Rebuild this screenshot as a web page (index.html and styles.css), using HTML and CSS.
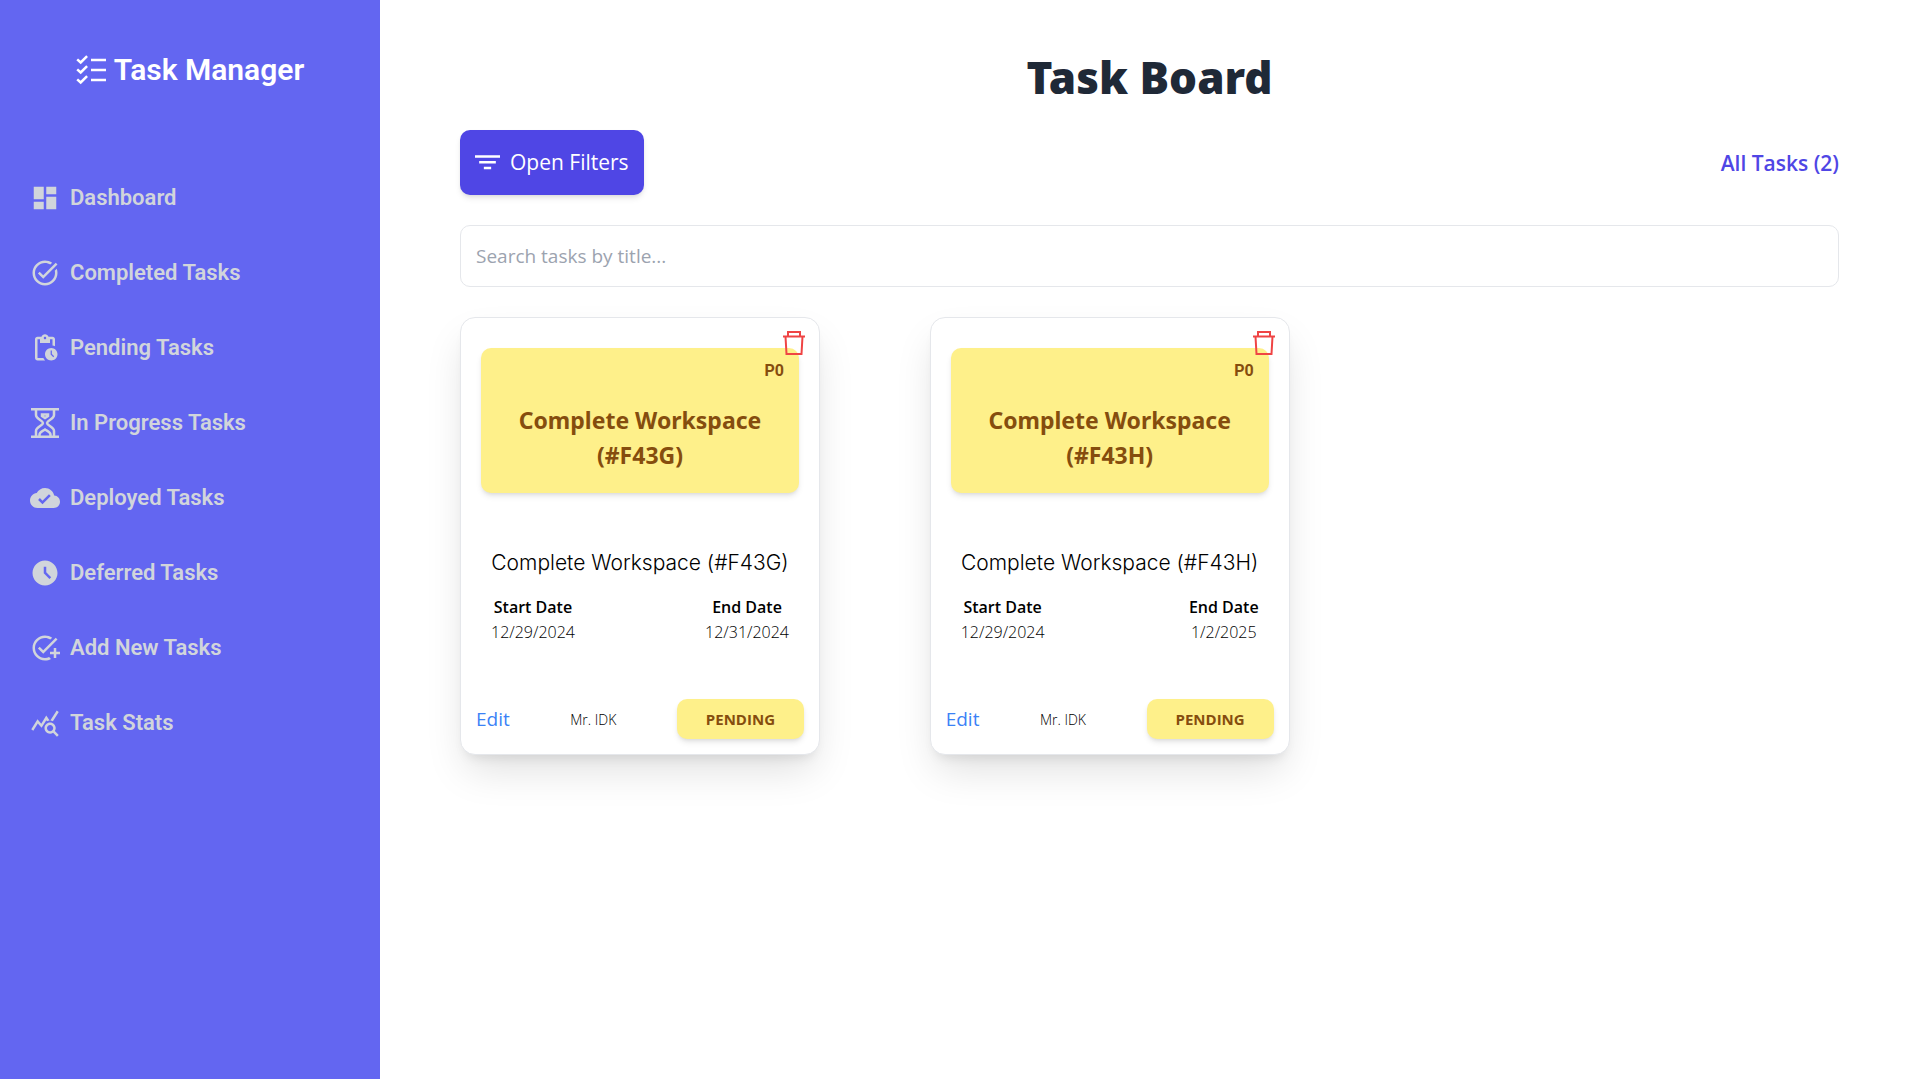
FILE: index.html
```html
<!DOCTYPE html>
<html lang="en">
<head>
  <meta charset="utf-8">
  <meta name="viewport" content="width=device-width, initial-scale=1">
  <title>Task Manager</title>
  <link rel="stylesheet" href="styles.css">
</head>
<body>
  <div class="app">
    <aside class="sidebar">
      <div class="brand">
        <svg class="icon" viewBox="0 0 30 30" fill="none" stroke="currentColor" stroke-width="2.5" aria-hidden="true">
          <path d="M1.200 4.300 4.700 7.500 11.100 1.200M1.200 14.300 4.700 17.500 11.100 11.200M1.200 24.300 4.700 27.500 11.100 21.200M15 5H30M15 15H30M15 25H30"/>
        </svg>
        <span>Task Manager</span>
      </div>
      <nav class="nav" aria-label="Main">
        <a class="nav-link" href="#dashboard">
          <svg class="icon" viewBox="0 0 24 24" fill="currentColor" aria-hidden="true"><path d="M3 13h8V3H3v10zm0 8h8v-6H3v6zm10 0h8V11h-8v10zm0-18v6h8V3h-8z"/></svg>
          Dashboard
        </a>
        <a class="nav-link" href="#completed">
          <svg class="icon" viewBox="0 0 24 24" fill="currentColor" aria-hidden="true"><path d="M22 5.18 10.59 16.6l-4.24-4.24 1.41-1.41 2.83 2.83 10-10L22 5.18zM19.79 10.22c.13.57.21 1.17.21 1.78 0 4.42-3.58 8-8 8s-8-3.58-8-8 3.58-8 8-8c1.58 0 3.04.46 4.28 1.25l1.44-1.44C16.1 2.67 14.13 2 12 2 6.48 2 2 6.48 2 12s4.48 10 10 10 10-4.48 10-10c0-1.19-.22-2.33-.6-3.39l-1.61 1.61z"/></svg>
          Completed Tasks
        </a>
        <a class="nav-link" href="#pending">
          <svg class="icon" viewBox="0 0 24 24" fill="currentColor" aria-hidden="true"><path d="M17 12c-2.76 0-5 2.24-5 5s2.24 5 5 5 5-2.24 5-5-2.24-5-5-5zm1.65 7.35L16.5 17.2V14h1v2.79l1.85 1.85-.7.71zM18 3h-3.18C14.4 1.84 13.3 1 12 1s-2.4.84-2.82 2H6c-1.1 0-2 .9-2 2v15c0 1.1.9 2 2 2h6.11c-.59-.57-1.07-1.25-1.42-2H6V5h2v3h8V5h2v5.08c.71.1 1.38.31 2 .6V5c0-1.1-.9-2-2-2zm-6 2c-.55 0-1-.45-1-1s.45-1 1-1 1 .45 1 1-.45 1-1 1z"/></svg>
          Pending Tasks
        </a>
        <a class="nav-link" href="#in-progress">
          <svg class="icon" viewBox="0 0 30 30" fill="none" stroke="currentColor" stroke-width="2.5" aria-hidden="true"><path d="M1 1.200H29M1 28.800H29M6 1V7C6 11 13 12.500 13 15S6 19 6 23V29M24 1V7C24 11 17 12.500 17 15S24 19 24 23V29M9.500 29V26.500C9.500 24 13 23 15 21.500 17 23 20.500 24 20.500 26.500V29M12 6.500H18V8L15 10 12 8Z"/></svg>
          In Progress Tasks
        </a>
        <a class="nav-link" href="#deployed">
          <svg class="icon" viewBox="0 0 24 24" fill="currentColor" aria-hidden="true"><path d="M19.35 10.04C18.67 6.59 15.64 4 12 4 9.11 4 6.6 5.64 5.35 8.04 2.34 8.36 0 10.91 0 14c0 3.31 2.69 6 6 6h13c2.76 0 5-2.24 5-5 0-2.64-2.05-4.78-4.65-4.96zM10 17l-3.5-3.5 1.41-1.41L10 14.170 15.18 9l1.41 1.41L10 17z"/></svg>
          Deployed Tasks
        </a>
        <a class="nav-link" href="#deferred">
          <svg class="icon" viewBox="0 0 24 24" fill="currentColor" aria-hidden="true"><path d="M12 2C6.500 2 2 6.500 2 12s4.500 10 10 10 10-4.500 10-10S17.500 2 12 2zm3.550 14.800L11 12.250V7h2v4.420l3.950 3.960-1.400 1.420z"/></svg>
          Deferred Tasks
        </a>
        <a class="nav-link" href="#add">
          <svg class="icon" viewBox="0 0 24 24" fill="currentColor" aria-hidden="true"><path d="M22 5.180 10.590 16.600l-4.240-4.240 1.410-1.410 2.830 2.830 10-10L22 5.180zM12 20c-4.410 0-8-3.590-8-8s3.590-8 8-8c1.570 0 3.040.46 4.280 1.250l1.450-1.450C16.100 2.670 14.130 2 12 2 6.480 2 2 6.480 2 12s4.480 10 10 10c1.730 0 3.360-.44 4.780-1.220l-1.500-1.500c-1 .46-2.110.72-3.280.72zm7-5h-3v2h3v3h2v-3h3v-2h-3v-3h-2v3z"/></svg>
          Add New Tasks
        </a>
        <a class="nav-link" href="#stats">
          <svg class="icon" viewBox="0 0 24 24" fill="currentColor" aria-hidden="true"><path d="M19.880 18.470c.44-.7.7-1.510.7-2.390 0-2.490-2.010-4.500-4.500-4.500s-4.500 2.010-4.500 4.500 2.010 4.500 4.490 4.500c.88 0 1.700-.26 2.390-.7L21.580 23 23 21.580l-3.120-3.110zm-3.800.11c-1.380 0-2.500-1.120-2.500-2.500s1.120-2.500 2.500-2.500 2.500 1.120 2.500 2.500-1.120 2.500-2.500 2.500zm-.36-8.500c-.74.02-1.450.18-2.100.45l-.55-.83-3.800 6.180-3.010-3.520-3.630 5.810L1 17l5-8 3 3.500L13 6l2.720 4.080zm2.590.5c-.64-.28-1.330-.45-2.050-.490L21.380 2 23 3.180l-4.690 7.400z"/></svg>
          Task Stats
        </a>
      </nav>
    </aside>

    <main class="main">
      <h1 class="page-title">Task Board</h1>
      <div class="toolbar">
        <button class="filter-button" type="button">
          <svg class="filter-icon" viewBox="0 0 24 24" fill="currentColor" aria-hidden="true"><path d="M0 5H24V7.500H0zM4 10.500H20V13H4zM8.500 16H15.500V18.500H8.500z"/></svg>
          Open Filters
        </button>
        <h2 class="count">All Tasks (2)</h2>
      </div>
      <input class="search" type="search" placeholder="Search tasks by title..." aria-label="Search tasks by title">

      <section class="cards" aria-label="Tasks">
        <article class="card">
          <button class="delete" type="button" aria-label="Delete task">
            <svg class="trash" viewBox="0 0 24 26" fill="none" stroke="currentColor" stroke-width="2" aria-hidden="true"><path d="M1 6.500H23M6 6V2H18V6M3.500 6.500 4.500 24H19.500L20.500 6.500"/></svg>
          </button>
          <header class="banner">
            <span class="priority">P0</span>
            <h3 class="banner-title">Complete Workspace (#F43G)</h3>
          </header>
          <p class="description">Complete Workspace (#F43G)</p>
          <dl class="dates">
            <div class="date"><dt>Start Date</dt><dd>12/29/2024</dd></div>
            <div class="date"><dt>End Date</dt><dd>12/31/2024</dd></div>
          </dl>
          <footer class="card-footer">
            <a class="edit" href="#edit-f43g">Edit</a>
            <span class="assignee">Mr. IDK</span>
            <span class="status">PENDING</span>
          </footer>
        </article>

        <article class="card">
          <button class="delete" type="button" aria-label="Delete task">
            <svg class="trash" viewBox="0 0 24 26" fill="none" stroke="currentColor" stroke-width="2" aria-hidden="true"><path d="M1 6.500H23M6 6V2H18V6M3.500 6.500 4.500 24H19.500L20.500 6.500"/></svg>
          </button>
          <header class="banner">
            <span class="priority">P0</span>
            <h3 class="banner-title">Complete Workspace (#F43H)</h3>
          </header>
          <p class="description">Complete Workspace (#F43H)</p>
          <dl class="dates">
            <div class="date"><dt>Start Date</dt><dd>12/29/2024</dd></div>
            <div class="date"><dt>End Date</dt><dd>1/2/2025</dd></div>
          </dl>
          <footer class="card-footer">
            <a class="edit" href="#edit-f43h">Edit</a>
            <span class="assignee">Mr. IDK</span>
            <span class="status">PENDING</span>
          </footer>
        </article>
      </section>
    </main>
  </div>
</body>
</html>
```
FILE: styles.css
```css
* {
  box-sizing: border-box;
}

body,
h1,
h2,
h3,
p,
dl,
dd {
  margin: 0;
}

body {
  font-family: "Open Sans", "Noto Sans", sans-serif;
  font-size: 19px;
  color: #000;
  background: #fff;
}

button,
input {
  font: inherit;
}

a {
  text-decoration: none;
}

.app {
  display: flex;
  min-height: 100vh;
}

/* Sidebar */

.sidebar {
  flex: 0 0 380px;
  padding: 50px 30px;
  background: #6366f1;
  font-family: Roboto, sans-serif;
  font-weight: 600;
}

.brand {
  display: flex;
  justify-content: center;
  align-items: center;
  gap: 8px;
  font-size: 30px;
  line-height: 40px;
  color: #fff;
}

.icon {
  flex: none;
  width: 30px;
  height: 30px;
}

.nav {
  display: flex;
  flex-direction: column;
  gap: 40px;
  margin-top: 90px;
}

.nav-link {
  display: flex;
  align-items: center;
  gap: 10px;
  font-size: 22px;
  line-height: 35px;
  color: #d1d5db;
}

/* Board */

.main {
  flex: 1;
  min-width: 0;
  padding: 52px 80px;
}

.page-title {
  font-family: "Noto Sans", sans-serif;
  font-size: 44px;
  font-weight: 900;
  line-height: 50px;
  text-align: center;
  color: #1f2937;
}

.toolbar {
  display: flex;
  justify-content: space-between;
  align-items: center;
  margin: 28px 0 30px;
  font-size: 21px;
}

.filter-button {
  display: flex;
  align-items: center;
  gap: 10px;
  padding: 15px;
  border: 0;
  border-radius: 10px;
  line-height: 35px;
  color: #fff;
  background: #4f46e5;
  box-shadow: 0 4px 6px -1px rgb(0 0 0 / 10%), 0 2px 4px -2px rgb(0 0 0 / 10%);
}

.filter-icon {
  width: 25px;
  height: 25px;
}

.count {
  font-size: 21px;
  font-weight: 600;
  color: #4f46e5;
}

.search {
  display: block;
  width: 100%;
  padding: 15px;
  border: 1px solid #e5e7eb;
  border-radius: 10px;
  line-height: 30px;
  background: #fff;
  appearance: none;
}

.search::placeholder {
  color: #9ca3af;
}

/* Task cards */

.cards {
  display: grid;
  grid-template-columns: repeat(auto-fill, minmax(360px, 1fr));
  gap: 30px;
  margin-top: 30px;
}

.card {
  position: relative;
  max-width: 360px;
  padding: 30px 15px 15px;
  border: 1px solid #e5e7eb;
  border-radius: 15px;
  background: #fff;
  box-shadow: 0 20px 40px -6px rgb(0 0 0 / 13%), 0 8px 12px -6px rgb(0 0 0 / 10%);
}

.delete {
  position: absolute;
  top: 12px;
  right: 13px;
  display: flex;
  padding: 0;
  border: 0;
  color: #ef4444;
  background: none;
}

.trash {
  width: 24px;
  height: 26px;
}

.banner {
  display: flex;
  flex-direction: column;
  margin: 0 5px;
  padding: 10px 15px 20px;
  border-radius: 10px;
  color: #854d0e;
  background: #fef08a;
  box-shadow: 0 4px 6px -1px rgb(0 0 0 / 10%), 0 2px 4px -2px rgb(0 0 0 / 10%);
}

.priority {
  align-self: flex-end;
  font-family: Roboto, sans-serif;
  font-size: 16px;
  font-weight: 700;
  line-height: 25px;
}

.banner-title {
  margin-top: 20px;
  font-family: "Noto Sans", sans-serif;
  font-size: 23px;
  font-weight: 700;
  line-height: 35px;
  text-align: center;
}

.description {
  margin-top: 50px;
  font-family: Inter, sans-serif;
  font-size: 21px;
  font-weight: 300;
  line-height: 40px;
  text-align: center;
}

.dates {
  display: flex;
  justify-content: space-between;
  margin-top: 12px;
  padding: 0 15px;
  font-size: 16px;
  line-height: 25px;
  text-align: center;
}

.date dt {
  font-weight: 600;
}

.date dd {
  font-weight: 300;
}

.card-footer {
  display: flex;
  justify-content: space-between;
  align-items: center;
  margin-top: 54px;
}

.edit {
  color: #3b82f6;
}

.assignee {
  font-size: 14px;
  font-weight: 300;
}

.status {
  padding: 10px 29px;
  border-radius: 10px;
  font-size: 15px;
  font-weight: 700;
  line-height: 20px;
  color: #854d0e;
  background: #fef08a;
  box-shadow: 0 4px 6px -1px rgb(0 0 0 / 10%), 0 2px 4px -2px rgb(0 0 0 / 10%);
}
```
